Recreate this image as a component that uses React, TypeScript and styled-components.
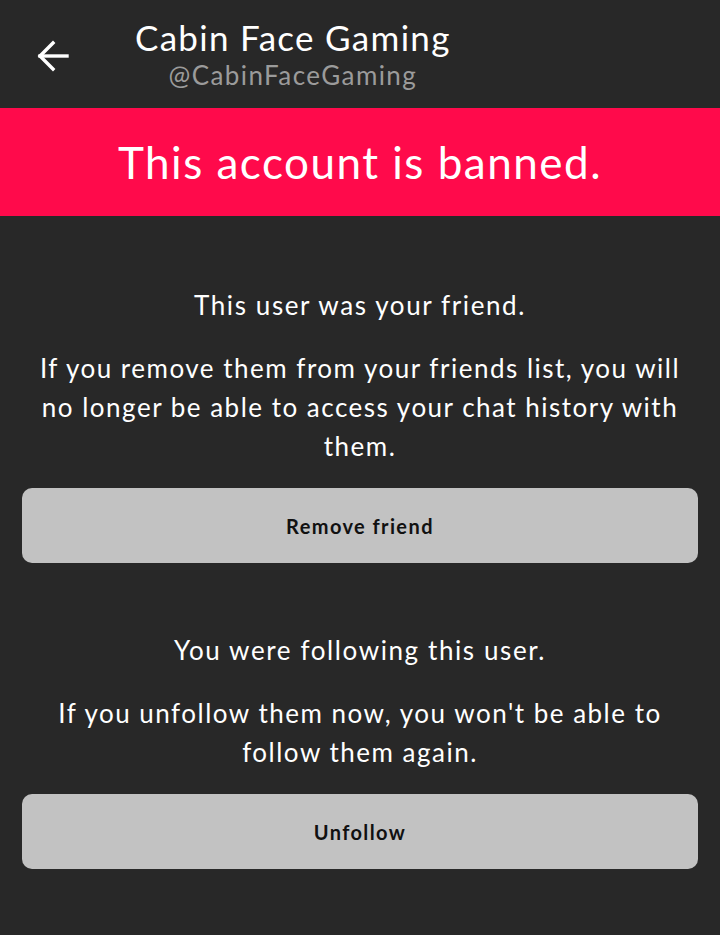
import React from "react";
import styled, { createGlobalStyle } from "styled-components";

const Global = createGlobalStyle`
  html, body { margin: 0; padding: 0; background: #282828; }
  body { font-family: Lato, "Noto Sans", sans-serif; -webkit-font-smoothing: antialiased; }
`;

const Page = styled.div`
  width: 720px;
  min-height: 935px;
  background: #282828;
  display: flex;
  flex-direction: column;
`;

const Header = styled.header`
  height: 108px;
  display: flex;
  align-items: center;
  padding: 0 0 0 36px;
  box-sizing: border-box;
`;

const BackButton = styled.button`
  width: 34px;
  height: 34px;
  padding: 0;
  border: none;
  background: none;
  color: #fff;
  display: flex;
  align-items: center;
  justify-content: center;
  margin-top: 4px;
`;

const TitleBlock = styled.div`
  display: flex;
  flex-direction: column;
  align-items: center;
  margin-left: 65px;
  margin-top: -2px;
`;

const Title = styled.h1`
  margin: 0;
  font-size: 35px;
  font-weight: 400;
  color: #fff;
  line-height: 40px;
  letter-spacing: 1.3px;
`;

const Handle = styled.div`
  font-size: 26px;
  color: #9b9b9b;
  line-height: 30px;
  letter-spacing: 1.4px;
  margin-top: 3px;
`;

const Banner = styled.div`
  height: 108px;
  background: #ff0a4b;
  display: flex;
  align-items: center;
  justify-content: center;
  color: #fff;
  font-size: 44px;
  letter-spacing: 1.5px;
`;

const Body = styled.main`
  padding: 0 22px;
  display: flex;
  flex-direction: column;
`;

const Section = styled.section<{ $top: number }>`
  margin-top: ${(p) => p.$top}px;
  display: flex;
  flex-direction: column;
  align-items: center;
`;

const Lead = styled.p`
  margin: 0;
  font-size: 26px;
  line-height: 39px;
  color: #fff;
  text-align: center;
  letter-spacing: 1.6px;
`;

const Note = styled.p`
  margin: 24px 0 0;
  font-size: 26px;
  line-height: 39px;
  color: #fff;
  text-align: center;
  padding: 0 6px;
  letter-spacing: 1.5px;
`;

const ActionButton = styled.button`
  margin-top: 22px;
  width: 100%;
  height: 75px;
  border: none;
  border-radius: 10px;
  background: #c2c2c2;
  color: #111;
  font-family: Lato, "Noto Sans", sans-serif;
  font-size: 20px;
  font-weight: 700;
  letter-spacing: 1.4px;
`;

export default function App() {
  return (
    <Page>
      <Global />
      <Header>
        <BackButton aria-label="Back">
          <svg width="34" height="34" viewBox="0 0 34 34" fill="none" stroke="currentColor" strokeWidth="3.4" strokeLinecap="square" strokeLinejoin="miter">
            <path d="M31 17H4" />
            <path d="M17 4L4 17l13 13" />
          </svg>
        </BackButton>
        <TitleBlock>
          <Title>Cabin Face Gaming</Title>
          <Handle>@CabinFaceGaming</Handle>
        </TitleBlock>
      </Header>
      <Banner>This account is banned.</Banner>
      <Body>
        <Section $top={70}>
          <Lead>This user was your friend.</Lead>
          <Note>If you remove them from your friends list, you will no longer be able to access your chat history with them.</Note>
          <ActionButton>Remove friend</ActionButton>
        </Section>
        <Section $top={68}>
          <Lead>You were following this user.</Lead>
          <Note>If you unfollow them now, you won't be able to follow them again.</Note>
          <ActionButton>Unfollow</ActionButton>
        </Section>
      </Body>
    </Page>
  );
}
